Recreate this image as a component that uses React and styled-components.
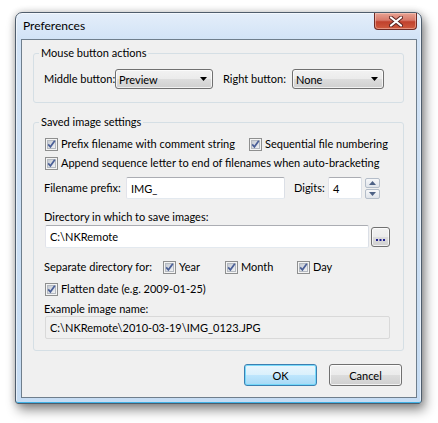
import React from "react";
import styled, { createGlobalStyle } from "styled-components";

const GlobalStyle = createGlobalStyle`
  html, body {
    margin: 0;
    padding: 0;
    background: #fff;
  }
  body {
    font-family: Lato, "Noto Sans", sans-serif;
    font-size: 11px;
    color: #000;
  }
`;

const Page = styled.div`
  width: 438px;
  height: 423px;
  box-sizing: border-box;
  padding: 12px 0 0 15px;
  background: #fff;
  overflow: hidden;
`;

const Window = styled.div`
  width: 407px;
  height: 392px;
  box-sizing: border-box;
  display: flex;
  flex-direction: column;
  padding: 0 4px 5px 5px;
  border: 1px solid #4f5d6c;
  border-radius: 7px 7px 3px 3px;
  background: linear-gradient(to bottom, #e4eefa 0, #d2e3f6 26px, #c6dcf3 100%);
  box-shadow: inset 0 -1px 0 #3fb2e6, inset 0 0 0 1px rgba(255, 255, 255, 0.55),
    3px 6px 12px rgba(0, 0, 0, 0.45), 0 0 7px rgba(0, 0, 0, 0.2);
`;

const TitleBar = styled.div`
  height: 26px;
  display: flex;
  justify-content: space-between;
  align-items: flex-start;
`;

const Title = styled.div`
  align-self: center;
  padding-left: 2px;
  font-size: 12px;
  line-height: 14px;
`;

const CloseButton = styled.div`
  width: 43px;
  height: 17px;
  box-sizing: border-box;
  display: flex;
  align-items: center;
  justify-content: center;
  border: 1px solid #6e2b25;
  border-top: none;
  border-radius: 0 0 4px 4px;
  background: linear-gradient(to bottom, #e8a393 0, #d8796a 45%, #c0412d 55%, #cf5a3f 100%);
  box-shadow: inset 0 0 0 1px rgba(255, 220, 210, 0.45);
`;

const Client = styled.div`
  flex: 1;
  box-sizing: border-box;
  border: 1px solid #6f7e8c;
  background: #f0f0f0;
  display: flex;
  flex-direction: column;
`;

const Group = styled.fieldset`
  margin: ${(p) => p.$mt}px 12px 0 11px;
  padding: ${(p) => p.$pt}px 10px ${(p) => p.$pb}px 10px;
  border: 1px solid #d5dfe5;
  border-radius: 3px;
  min-inline-size: 0;
`;

const Legend = styled.legend`
  margin-left: -5px;
  padding: 0 2px;
  line-height: 14px;
  height: 14px;
`;

const Row = styled.div`
  display: flex;
  align-items: center;
  height: ${(p) => p.$h}px;
  margin-top: ${(p) => p.$mt || 0}px;
`;

const Label = styled.span`
  flex: none;
  width: ${(p) => (p.$w ? `${p.$w}px` : "auto")};
  margin-left: ${(p) => p.$ml || 0}px;
  white-space: nowrap;
  line-height: 14px;
`;

const Combo = styled.div`
  flex: none;
  width: ${(p) => p.$w}px;
  height: 20px;
  box-sizing: border-box;
  display: flex;
  align-items: center;
  justify-content: space-between;
  padding: 0 5px 0 3px;
  border: 1px solid #707070;
  border-radius: 3px;
  background: linear-gradient(to bottom, #f2f2f2 0, #ebebeb 50%, #dddddd 50%, #cfcfcf 100%);
  box-shadow: inset 0 0 0 1px rgba(255, 255, 255, 0.7);
`;

const CheckItem = styled.label`
  flex: none;
  display: flex;
  align-items: center;
  gap: 3px;
  width: ${(p) => (p.$w ? `${p.$w}px` : "auto")};
  margin-left: ${(p) => p.$ml || 0}px;
  white-space: nowrap;
  line-height: 14px;
`;

const TextBox = styled.div`
  flex: none;
  width: ${(p) => p.$w}px;
  height: ${(p) => p.$h}px;
  margin-left: ${(p) => p.$ml || 0}px;
  box-sizing: border-box;
  display: flex;
  align-items: center;
  padding-left: 4px;
  border: 1px solid;
  border-color: #abadb3 #dbdfe6 #e3e9ef #e2e3ea;
  border-radius: 2px;
  background: #fff;
`;

const ReadOnlyBox = styled(TextBox)`
  border-color: #d9d9d9;
  background: #f0f0f0;
`;

const Spinner = styled.div`
  flex: none;
  display: flex;
  flex-direction: column;
  gap: 1px;
  margin-left: 3px;
`;

const SpinButton = styled.div`
  width: 15px;
  height: 10px;
  box-sizing: border-box;
  display: flex;
  align-items: center;
  justify-content: center;
  border: 1px solid #b4bdc9;
  border-radius: 2px;
  background: linear-gradient(to bottom, #f6f7f9, #e0e4ea);
`;

const BrowseButton = styled.div`
  flex: none;
  width: 19px;
  height: 20px;
  margin-left: 2px;
  box-sizing: border-box;
  display: flex;
  align-items: flex-end;
  justify-content: center;
  padding-bottom: 5px;
  border: 1px solid #707070;
  border-radius: 3px;
  background: linear-gradient(to bottom, #f2f2f2 0, #ebebeb 50%, #dddddd 50%, #cfcfcf 100%);
  box-shadow: inset 0 0 0 1px rgba(255, 255, 255, 0.7);
`;

const ButtonRow = styled.div`
  display: flex;
  justify-content: flex-end;
  gap: 12px;
  margin: 13px 14px 0 0;
`;

const Button = styled.div`
  width: 73px;
  height: 22px;
  box-sizing: border-box;
  display: flex;
  align-items: center;
  justify-content: center;
  border: 1px solid ${(p) => (p.$primary ? "#3c7fb1" : "#707070")};
  border-radius: 3px;
  background: ${(p) =>
    p.$primary
      ? "linear-gradient(to bottom, #eaf6fd 0, #d9f0fc 50%, #bee6fd 50%, #a7d9f5 100%)"
      : "linear-gradient(to bottom, #f2f2f2 0, #ebebeb 50%, #dddddd 50%, #cfcfcf 100%)"};
  box-shadow: inset 0 0 0 1px
    ${(p) => (p.$primary ? "rgba(110, 215, 250, 0.9)" : "rgba(255, 255, 255, 0.75)")};
`;

const CheckBox = () => (
  <svg width="13" height="13" viewBox="0 0 13 13">
    <defs>
      <linearGradient id="cbfill" x1="0" y1="0" x2="1" y2="1">
        <stop offset="0" stopColor="#c3c8d0" />
        <stop offset="1" stopColor="#f4f5f7" />
      </linearGradient>
    </defs>
    <rect x="0.5" y="0.5" width="12" height="12" fill="#f4f4f4" stroke="#8e8f8f" />
    <rect x="2.5" y="2.5" width="8" height="8" fill="url(#cbfill)" stroke="#b5bac1" />
    <path d="M3.2 6.4 L5.4 8.8 L9.8 2.8" fill="none" stroke="#4a5f97" strokeWidth="1.7" />
  </svg>
);

const Check = ({ children, w, ml }) => (
  <CheckItem $w={w} $ml={ml}>
    <CheckBox />
    <span>{children}</span>
  </CheckItem>
);

const DownArrow = () => (
  <svg width="7" height="4" viewBox="0 0 7 4">
    <path d="M0 0 H7 L3.5 4 Z" fill="#000" />
  </svg>
);

const SpinArrow = ({ up }) => (
  <svg width="7" height="4" viewBox="0 0 7 4">
    <path d={up ? "M0 4 H7 L3.5 0 Z" : "M0 0 H7 L3.5 4 Z"} fill="#4d6185" />
  </svg>
);

const CloseGlyph = () => (
  <svg width="14" height="11" viewBox="0 0 14 11">
    <path d="M2 1.5 L12 9.5 M12 1.5 L2 9.5" stroke="#5a2320" strokeWidth="4" strokeLinecap="round" />
    <path d="M2 1.5 L12 9.5 M12 1.5 L2 9.5" stroke="#fff" strokeWidth="2.2" strokeLinecap="round" />
  </svg>
);

const Dots = () => (
  <svg width="9" height="2" viewBox="0 0 9 2">
    <rect x="0" y="0" width="2" height="2" fill="#1f1f8f" />
    <rect x="3.5" y="0" width="2" height="2" fill="#1f1f8f" />
    <rect x="7" y="0" width="2" height="2" fill="#1f1f8f" />
  </svg>
);

export default function App() {
  return (
    <>
      <GlobalStyle />
      <Page>
        <Window>
          <TitleBar>
            <Title>Preferences</Title>
            <CloseButton>
              <CloseGlyph />
            </CloseButton>
          </TitleBar>
          <Client>
            <Group $mt={6} $pt={9} $pb={13}>
              <Legend>Mouse button actions</Legend>
              <Row $h={20}>
                <Label $w={71}>Middle button:</Label>
                <Combo $w={98}>
                  <span>Preview</span>
                  <DownArrow />
                </Combo>
                <Label $w={69} $ml={10}>Right button:</Label>
                <Combo $w={92}>
                  <span>None</span>
                  <DownArrow />
                </Combo>
              </Row>
            </Group>

            <Group $mt={12} $pt={7} $pb={11}>
              <Legend>Saved image settings</Legend>
              <Row $h={16}>
                <Check w={204} ml={1}>Prefix filename with comment string</Check>
                <Check>Sequential file numbering</Check>
              </Row>
              <Row $h={16} $mt={3}>
                <Check ml={1}>Append sequence letter to end of filenames when auto-bracketing</Check>
              </Row>
              <Row $h={22} $mt={6}>
                <Label $w={82}>Filename prefix:</Label>
                <TextBox $w={159} $h={22}>IMG_</TextBox>
                <Label $w={34} $ml={9}>Digits:</Label>
                <TextBox $w={34} $h={22}>4</TextBox>
                <Spinner>
                  <SpinButton>
                    <SpinArrow up />
                  </SpinButton>
                  <SpinButton>
                    <SpinArrow />
                  </SpinButton>
                </Spinner>
              </Row>
              <Row $h={16} $mt={10}>
                <Label>Directory in which to save images:</Label>
              </Row>
              <Row $h={23}>
                <TextBox $w={324} $h={23} $ml={1}>C:\NKRemote</TextBox>
                <BrowseButton>
                  <Dots />
                </BrowseButton>
              </Row>
              <Row $h={16} $mt={11}>
                <Label $w={119}>Separate directory for:</Label>
                <Check w={62}>Year</Check>
                <Check w={72}>Month</Check>
                <Check>Day</Check>
              </Row>
              <Row $h={16} $mt={6}>
                <Check ml={1}>Flatten date (e.g. 2009-01-25)</Check>
              </Row>
              <Row $h={14} $mt={5}>
                <Label>Example image name:</Label>
              </Row>
              <Row $h={23}>
                <ReadOnlyBox $w={345} $h={23} $ml={1}>
                  C:\NKRemote\2010-03-19\IMG_0123.JPG
                </ReadOnlyBox>
              </Row>
            </Group>

            <ButtonRow>
              <Button $primary>OK</Button>
              <Button>Cancel</Button>
            </ButtonRow>
          </Client>
        </Window>
      </Page>
    </>
  );
}
